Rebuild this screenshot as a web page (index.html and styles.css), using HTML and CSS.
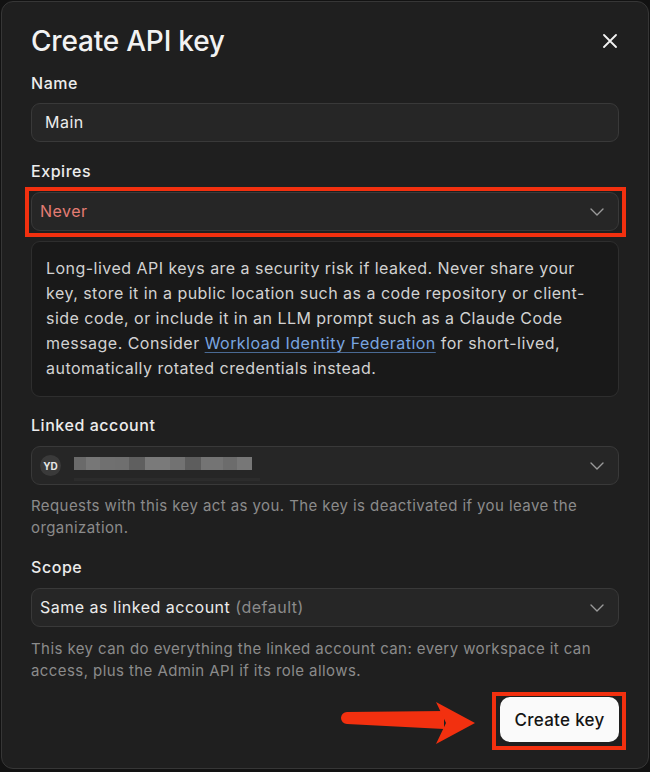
FILE: index.html
```html
<!DOCTYPE html>
<html lang="en">
<head>
<meta charset="utf-8">
<title>Create API key</title>
<link rel="stylesheet" href="styles.css">
</head>
<body>
<div class="modal">
  <div class="header">
    <h1 class="title">Create API key</h1>
    <button class="close" aria-label="Close">
      <svg width="14" height="14" viewBox="0 0 14 14"><path d="M1 1L13 13M13 1L1 13" stroke="#f2f2f2" stroke-width="1.8" stroke-linecap="round"/></svg>
    </button>
  </div>

  <div class="label lbl-name">Name</div>
  <div class="field input-field">Main</div>

  <div class="label lbl-expires">Expires</div>
  <div class="field select-field">
    <span class="never">Never</span>
    <svg class="chev" width="14" height="8" viewBox="0 0 14 8"><path d="M1 1L7 7L13 1" fill="none" stroke="#9a9a9a" stroke-width="1.4" stroke-linecap="round" stroke-linejoin="round"/></svg>
  </div>

  <div class="warning">
    Long-lived API keys are a security risk if leaked. Never share your key, store it in a public location such as a code repository or client-side code, or include it in an LLM prompt such as a Claude Code message. Consider <a class="link">Workload Identity Federation</a> for short-lived, automatically rotated credentials instead.
  </div>

  <div class="label lbl-linked">Linked account</div>
  <div class="field select-field linked">
    <span class="avatar">YD</span>
    <span class="blur">
      <span class="px p1"></span><span class="px p2"></span><span class="px p3"></span><span class="px p4"></span><span class="px p5"></span><span class="px p6"></span><span class="px p7"></span><span class="px p8"></span><span class="px p9"></span><span class="px p10"></span><span class="px p11"></span>
      <span class="blur-under"></span>
    </span>
    <svg class="chev" width="14" height="8" viewBox="0 0 14 8"><path d="M1 1L7 7L13 1" fill="none" stroke="#9a9a9a" stroke-width="1.4" stroke-linecap="round" stroke-linejoin="round"/></svg>
  </div>
  <p class="help help-linked">Requests with this key act as you. The key is deactivated if you leave the organization.</p>

  <div class="label lbl-scope">Scope</div>
  <div class="field select-field">
    <span class="scope-val">Same as linked account <span class="muted">(default)</span></span>
    <svg class="chev" width="14" height="8" viewBox="0 0 14 8"><path d="M1 1L7 7L13 1" fill="none" stroke="#9a9a9a" stroke-width="1.4" stroke-linecap="round" stroke-linejoin="round"/></svg>
  </div>
  <p class="help help-scope">This key can do everything the linked account can: every workspace it can access, plus the Admin API if its role allows.</p>

  <div class="footer">
    <button class="create">Create key</button>
  </div>
</div>

<div class="mark mark-expires"></div>
<div class="mark mark-button"></div>
<svg class="arrow" width="140" height="52" viewBox="0 0 140 52">
  <path d="M7 16 L104 15 L104 33 L7 28 A6 6 0 0 1 7 16 Z" fill="#f2300f"/>
  <path d="M96 6 L135 27 L96 48 L106 27 Z" fill="#f2300f"/>
</svg>
</body>
</html>
```

FILE: styles.css
```css
* { box-sizing: border-box; }
html, body { margin: 0; padding: 0; }
body {
  background: #121212;
  width: 650px;
  height: 772px;
  font-family: Inter, "Noto Sans", "Liberation Sans", sans-serif;
  color: #ececec;
  position: relative;
  overflow: hidden;
}
.modal {
  margin: 1px 0 0 1px;
  width: 648px;
  height: 768px;
  background: #1f1f1f;
  border: 1px solid #363636;
  border-radius: 12px;
  padding: 23px 29px 0 29px;
}
.header {
  display: flex;
  justify-content: space-between;
  align-items: center;
  height: 32px;
}
.title {
  margin: 0;
  font-size: 28px;
  line-height: 32px;
  font-weight: 500;
  color: #f2f2f2;
  letter-spacing: -0.2px;
}
.close {
  background: none;
  border: 0;
  padding: 0;
  width: 14px;
  height: 14px;
  margin-right: 2px;
  display: flex;
}
.label {
  font-size: 16px;
  line-height: 22px;
  font-weight: 500;
  color: #ececec;
  letter-spacing: 0.55px;
}
.lbl-name { margin-top: 15px; }
.lbl-expires { margin-top: 18px; }
.lbl-linked { margin-top: 17px; }
.lbl-scope { margin-top: 17px; }
.field {
  margin-top: 10px;
  height: 39px;
  background: #262626;
  border: 1px solid #393939;
  border-radius: 9px;
  display: flex;
  align-items: center;
  padding-bottom: 2px;
  font-size: 16px;
  color: #ececec;
  letter-spacing: 0.5px;
}
.input-field { margin-top: 9px; padding-left: 13px; }
.select-field { padding-left: 8px; padding-right: 14px; justify-content: space-between; }
.never { color: #e47d74; }
.chev { flex: none; margin-top: 2px; }
.warning {
  margin-top: 10px;
  background: #191919;
  border: 1px solid #2e2e2e;
  border-radius: 9px;
  padding: 14px 20px 15px 14px;
  font-size: 16px;
  line-height: 25px;
  color: #d2d2d2;
  letter-spacing: 0.47px;
}
.link {
  color: #79a6e0;
  text-decoration: underline;
  text-decoration-color: #4a6a94;
  text-underline-offset: 3px;
}
.linked { padding-left: 8px; }
.avatar {
  flex: none;
  width: 21px;
  height: 21px;
  margin-top: 2px;
  border-radius: 50%;
  background: #3a3a3a;
  color: #e6e6e6;
  font-size: 10px;
  font-weight: 700;
  letter-spacing: 0;
  display: flex;
  align-items: center;
  justify-content: center;
}
.blur {
  position: relative;
  display: flex;
  height: 13px;
  margin-left: 13px;
  margin-right: auto;
  margin-top: -2px;
}
.px { height: 13px; display: block; }
.p1 { width: 12px; background: #6a6a6a; }
.p2 { width: 14px; background: #777; }
.p3 { width: 15px; background: #707070; }
.p4 { width: 14px; background: #6f6f6f; }
.p5 { width: 16px; background: #5f5f5f; }
.p6 { width: 25px; background: #7a7a7a; }
.p7 { width: 15px; background: #727272; }
.p8 { width: 16px; background: #5d5d5d; }
.p9 { width: 22px; background: #747474; }
.p10 { width: 14px; background: #6c6c6c; }
.p11 { width: 15px; background: #777; }
.blur-under {
  position: absolute;
  left: 0;
  top: 21px;
  width: 186px;
  height: 3px;
  background: #2c2c2c;
}
.help {
  margin: 10px 0 0 0;
  font-size: 15px;
  line-height: 22px;
  color: #8b8b8b;
  letter-spacing: 0.42px;
}
.help-scope { margin-top: 11px; }
.scope-val { color: #ececec; }
.muted { color: #8b8b8b; }
.footer {
  margin-top: 15px;
  display: flex;
  justify-content: flex-end;
}
.create {
  height: 45px;
  width: 119px;
  background: #fafafa;
  color: #141414;
  border: 0;
  border-radius: 10px;
  font-family: inherit;
  font-size: 17px;
  font-weight: 500;
  letter-spacing: 0.3px;
  padding: 0;
}
.mark {
  position: absolute;
  border: 4px solid #f2300f;
}
.mark-expires { left: 25px; top: 187px; width: 601px; height: 50px; }
.mark-button { left: 492px; top: 692px; width: 134px; height: 58px; }
.arrow { position: absolute; left: 340px; top: 696px; }
```
